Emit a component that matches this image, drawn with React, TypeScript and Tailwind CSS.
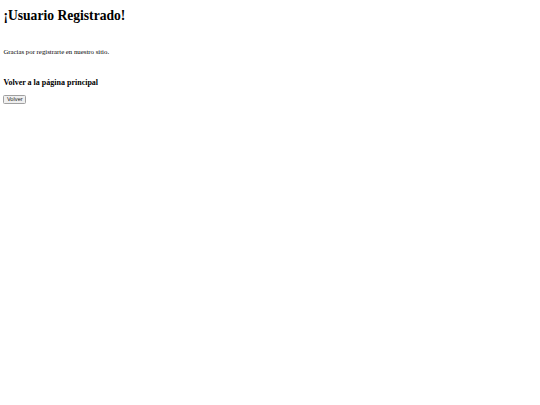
export default function App() {
  return (
    <div className="min-h-[405px] bg-white px-[3.4px] pt-[8px] text-black" style={{ fontFamily: '"Liberation Serif", serif' }}>
      <h1 className="text-[13.6px] font-bold leading-[15.6px]">¡Usuario Registrado!</h1>
      <p className="mt-[24px] text-[6.8px] leading-[7.8px]">Gracias por registrarte en nuestro sitio.</p>
      <h3 className="mt-[22.5px] text-[8px] font-bold leading-[9.2px]">Volver a la página principal</h3>
      <div className="mt-[8px] flex">
        <button
          className="h-[9px] rounded-[1.5px] border-[0.5px] border-[#a0a0a0] bg-[#efefef] px-[2.5px] text-[5.7px] leading-[7px] text-[#222]"
          style={{ fontFamily: '"Liberation Sans", Arial, sans-serif' }}
        >
          Volver
        </button>
      </div>
    </div>
  );
}
